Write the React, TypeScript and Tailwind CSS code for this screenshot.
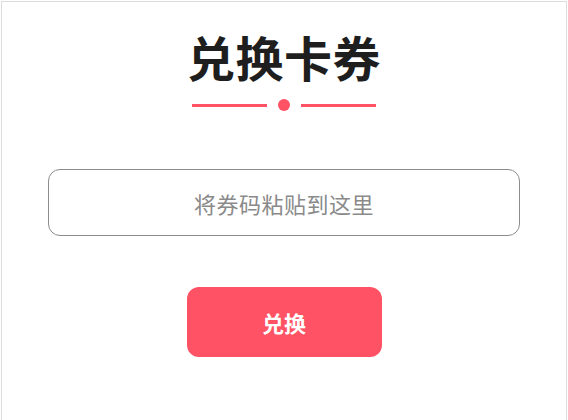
import { useState } from "react";

const FONT = '"Noto Sans CJK SC", "Noto Sans", sans-serif';

export default function App() {
  const [code, setCode] = useState("");

  return (
    <div className="min-h-screen bg-white" style={{ fontFamily: FONT }}>
      <div className="ml-px mt-px h-[440px] w-[566px] border border-b-0 border-[#dcdcdc] bg-white">
        <div className="flex flex-col items-center pt-[22px]">
          <h1 className="text-[48px] font-bold leading-[64px] tracking-[0.5px] text-[#1e1e1e]">
            兑换卡券
          </h1>

          {/* 标题下的装饰线 */}
          <div className="mt-[11px] flex items-center gap-[11px]">
            <span className="h-[3px] w-[75px] bg-[#ff5264]" />
            <span className="size-[12px] rounded-full bg-[#ff5264]" />
            <span className="h-[3px] w-[75px] bg-[#ff5264]" />
          </div>

          <input
            value={code}
            onChange={(e) => setCode(e.target.value)}
            placeholder="将券码粘贴到这里"
            className="mt-[58px] h-[67px] w-[472px] rounded-[12px] border-[1.5px] border-[#8c8c8c] bg-white text-center text-[22px] tracking-[0.5px] text-[#333] outline-none placeholder:text-[#8a8a8a]"
          />

          <button
            type="button"
            className="mt-[51px] h-[70px] w-[195px] rounded-[12px] bg-[#ff5264] text-[22px] font-bold text-white"
          >
            兑换
          </button>
        </div>
      </div>
    </div>
  );
}
